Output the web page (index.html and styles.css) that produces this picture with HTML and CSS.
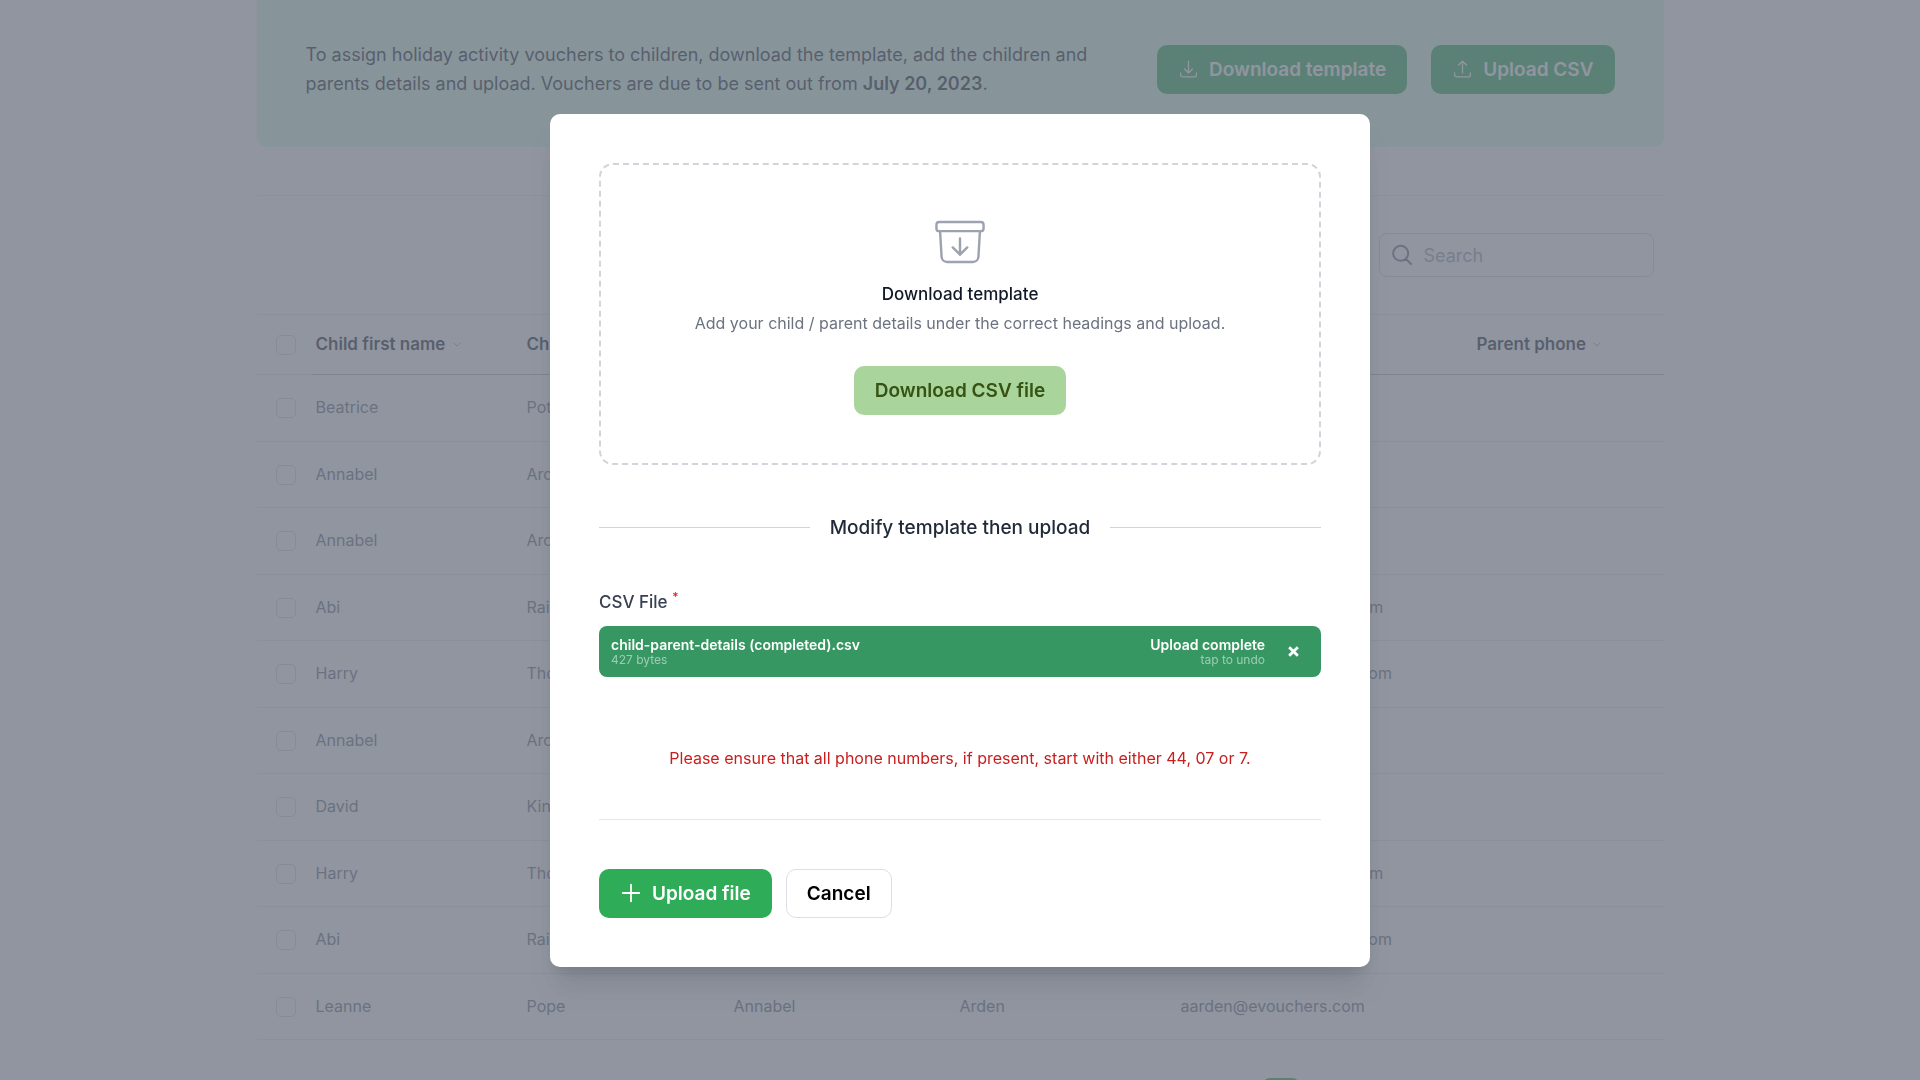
FILE: index.html
```html
<!DOCTYPE html>
<html lang="en">
<head>
    <meta charset="UTF-8">
    <meta name="viewport" content="width=device-width, initial-scale=1.0">
    <link rel="stylesheet" href="styles.css">
    <title>Upload children</title>
</head>
<body class="modal-open">
    <main class="container">
        <section class="banner">
            <p>To assign holiday activity vouchers to children, download the template, add the children and parents details and upload. Vouchers are due to be sent out from <strong>July 20, 2023</strong>.</p>
            <div class="banner-actions">
                <button type="button" class="btn btn-green">
                    <svg class="icon" viewBox="0 0 24 24"><path d="M3 16.5v2.25A2.25 2.25 0 0 0 5.25 21h13.5A2.25 2.25 0 0 0 21 18.75V16.5M16.5 12 12 16.5m0 0L7.5 12m4.5 4.5V3"/></svg>
                    Download template
                </button>
                <button type="button" class="btn btn-green">
                    <svg class="icon" viewBox="0 0 24 24"><path d="M3 16.5v2.25A2.25 2.25 0 0 0 5.25 21h13.5A2.25 2.25 0 0 0 21 18.75V16.5m-13.5-9L12 3m0 0 4.5 4.5M12 3v13.5"/></svg>
                    Upload CSV
                </button>
            </div>
        </section>

        <div class="toolbar">
            <div class="search">
                <svg class="search-icon" viewBox="0 0 24 24"><path d="m21 21-5.2-5.2m0 0A7.5 7.5 0 1 0 5.2 5.2a7.5 7.5 0 0 0 10.6 10.6Z"/></svg>
                <input type="search" placeholder="Search" aria-label="Search">
            </div>
        </div>

        <table class="children">
            <colgroup>
                <col class="col-check">
                <col class="col-first">
                <col class="col-last">
                <col class="col-pfirst">
                <col class="col-plast">
                <col class="col-email">
                <col class="col-phone">
            </colgroup>
            <thead>
                <tr>
                    <th class="check"><input type="checkbox" aria-label="Select all"></th>
                    <th>Child first name <svg class="sort" viewBox="0 0 10 10"><path d="m2 3 3 3 3-3"/></svg></th>
                    <th>Child last name <svg class="sort" viewBox="0 0 10 10"><path d="m2 3 3 3 3-3"/></svg></th>
                    <th>Parent first name <svg class="sort" viewBox="0 0 10 10"><path d="m2 3 3 3 3-3"/></svg></th>
                    <th>Parent last name <svg class="sort" viewBox="0 0 10 10"><path d="m2 3 3 3 3-3"/></svg></th>
                    <th>Parent email <svg class="sort" viewBox="0 0 10 10"><path d="m2 3 3 3 3-3"/></svg></th>
                    <th>Parent phone <svg class="sort" viewBox="0 0 10 10"><path d="m2 3 3 3 3-3"/></svg></th>
                </tr>
            </thead>
            <tbody>
                <tr><td class="check"><input type="checkbox" aria-label="Select Beatrice"></td><td>Beatrice</td><td>Potter</td><td></td><td></td><td></td><td></td></tr>
                <tr><td class="check"><input type="checkbox" aria-label="Select Annabel"></td><td>Annabel</td><td>Arden</td><td></td><td></td><td></td><td></td></tr>
                <tr><td class="check"><input type="checkbox" aria-label="Select Annabel"></td><td>Annabel</td><td>Arden</td><td></td><td></td><td></td><td></td></tr>
                <tr><td class="check"><input type="checkbox" aria-label="Select Abi"></td><td>Abi</td><td>Raines</td><td>Stephen</td><td>Raines</td><td>sraines12@evouchers.com</td><td></td></tr>
                <tr><td class="check"><input type="checkbox" aria-label="Select Harry"></td><td>Harry</td><td>Thomas</td><td>Martin</td><td>Thomas</td><td>mthomas2@evouchers.com</td><td></td></tr>
                <tr><td class="check"><input type="checkbox" aria-label="Select Annabel"></td><td>Annabel</td><td>Arden</td><td></td><td></td><td></td><td></td></tr>
                <tr><td class="check"><input type="checkbox" aria-label="Select David"></td><td>David</td><td>King</td><td></td><td></td><td></td><td></td></tr>
                <tr><td class="check"><input type="checkbox" aria-label="Select Harry"></td><td>Harry</td><td>Thomas</td><td>Stephen</td><td>Thomas</td><td>sraines12@evouchers.com</td><td></td></tr>
                <tr><td class="check"><input type="checkbox" aria-label="Select Abi"></td><td>Abi</td><td>Raines</td><td>Martin</td><td>Raines</td><td>mthomas2@evouchers.com</td><td></td></tr>
                <tr><td class="check"><input type="checkbox" aria-label="Select Leanne"></td><td>Leanne</td><td>Pope</td><td>Annabel</td><td>Arden</td><td>aarden@evouchers.com</td><td></td></tr>
            </tbody>
        </table>

        <nav class="pager">
            <a href="#" class="current" aria-label="Page 1"></a>
        </nav>
    </main>

    <div class="overlay">
        <form class="modal" role="dialog" aria-modal="true">
            <div class="template-box">
                <svg class="archive-icon" viewBox="0 0 24 24"><path d="m20.25 7.5-.625 10.632a2.25 2.25 0 0 1-2.247 2.118H6.622a2.25 2.25 0 0 1-2.247-2.118L3.75 7.5M12 10.5v6.75m0 0-3-3m3 3 3-3M3.375 7.5h17.25c.621 0 1.125-.504 1.125-1.125v-1.5c0-.621-.504-1.125-1.125-1.125H3.375c-.621 0-1.125.504-1.125 1.125v1.5c0 .621.504 1.125 1.125 1.125Z"/></svg>
                <h3>Download template</h3>
                <p>Add your child / parent details under the correct headings and upload.</p>
                <button type="button" class="btn btn-light">Download CSV file</button>
            </div>

            <h2 class="divider">Modify template then upload</h2>

            <label class="file-label" for="csv-file">CSV File <sup>*</sup></label>
            <div class="file-item">
                <input type="file" id="csv-file" accept=".csv">
                <div class="file-info">
                    <span class="file-main">child-parent-details (completed).csv</span>
                    <span class="file-sub">427 bytes</span>
                </div>
                <div class="file-status">
                    <span class="file-main">Upload complete</span>
                    <span class="file-sub">tap to undo</span>
                </div>
                <button type="button" class="file-remove" aria-label="Remove">
                    <svg viewBox="0 0 12 12"><path d="m2 2 8 8M10 2l-8 8"/></svg>
                </button>
            </div>

            <p class="error">Please ensure that all phone numbers, if present, start with either 44, 07 or 7.</p>

            <div class="modal-actions">
                <button type="submit" class="btn btn-green">
                    <svg class="icon" viewBox="0 0 24 24"><path d="M12 3v18M3 12h18"/></svg>
                    Upload file
                </button>
                <button type="button" class="btn btn-white">Cancel</button>
            </div>
        </form>
    </div>
</body>
</html>
```
FILE: styles.css
```css
* {
    box-sizing: border-box;
}

body {
    margin: 0;
    font-family: Inter, "Liberation Sans", sans-serif;
    font-size: 16px;
    line-height: 24px;
    color: #6b7280;
    background-color: #fff;
}

.modal-open {
    height: 100vh;
    overflow: hidden;
}

h2, h3, p {
    margin: 0;
}

button, input {
    font-family: inherit;
}

svg {
    fill: none;
    stroke: currentColor;
    stroke-linecap: round;
    stroke-linejoin: round;
}

.container {
    max-width: 1407px;
    margin: 0 auto;
}

/* buttons */
.btn {
    display: inline-flex;
    align-items: center;
    gap: 10px;
    height: 49px;
    padding: 0 20px;
    border: 1px solid transparent;
    border-radius: 10px;
    font-size: 19px;
    font-weight: 600;
    white-space: nowrap;
    cursor: pointer;
}

.btn-green {
    background-color: #2fac58;
    color: #fff;
}

.btn-light {
    background-color: #a9d59d;
    color: #365314;
}

.btn-white {
    background-color: #fff;
    border-color: #dcdfe3;
    color: #000;
}

.icon {
    width: 22px;
    height: 22px;
    stroke-width: 2;
}

/* page behind the modal */
.banner {
    display: flex;
    align-items: center;
    justify-content: space-between;
    gap: 48px;
    padding: 40px 49px 49px;
    border-radius: 0 0 10px 10px;
    background-color: #dcfce7;
    color: #1f2937;
    font-size: 18px;
    line-height: 29px;
}

.banner strong {
    font-weight: 600;
}

.banner-actions {
    display: flex;
    flex-shrink: 0;
    gap: 24px;
}

.banner .icon {
    width: 21px;
    stroke-width: 1.5;
}

.toolbar {
    display: flex;
    justify-content: flex-end;
    margin-top: 48px;
    padding: 37px 10px;
    border-top: 1px solid #eceef1;
}

.search {
    display: flex;
    align-items: center;
    gap: 10px;
    width: 275px;
    height: 44px;
    padding: 0 10px;
    border: 1px solid #d1d5db;
    border-radius: 8px;
}

.search-icon {
    width: 24px;
    height: 24px;
    stroke-width: 2;
}

.search input {
    flex: 1;
    min-width: 0;
    padding: 0;
    border: none;
    outline: none;
    background: none;
    font-size: 18px;
}

.search input::placeholder {
    color: #9ca3af;
}

.children {
    width: 100%;
    table-layout: fixed;
    border-collapse: collapse;
    border-top: 1px solid #e5e7eb;
}

.col-check { width: 55px; }
.col-first { width: 211px; }
.col-last { width: 207px; }
.col-pfirst { width: 226px; }
.col-plast { width: 221px; }
.col-email { width: 296px; }

.children th,
.children td {
    padding: 0 4px 2px;
    border-bottom: 1px solid #e5e7eb;
    text-align: left;
    white-space: nowrap;
}

.children th {
    height: 60px;
    border-bottom-color: #b6bac2;
    color: #1f2937;
    font-size: 17px;
    font-weight: 600;
}

.children td {
    height: 66px;
}

.children tr:nth-child(odd) td {
    height: 67px;
}

.children .check {
    padding: 0 0 0 19px;
    border-bottom-color: #e5e7eb;
}

.children input {
    display: block;
    appearance: none;
    width: 20px;
    height: 20px;
    margin: 0;
    border: 1px solid #d1d5db;
    border-radius: 5px;
}

.sort {
    width: 10px;
    height: 10px;
    margin-left: 2px;
    color: #9ca3af;
}

.pager {
    display: flex;
    justify-content: flex-end;
    margin-top: 38px;
    padding-right: 364px;
}

.pager a {
    width: 38px;
    height: 38px;
    border-radius: 8px;
    background-color: #2fac58;
}

/* modal */
.overlay {
    position: fixed;
    inset: 0;
    display: flex;
    align-items: center;
    justify-content: center;
    background-color: rgba(107, 114, 128, 0.75);
}

.modal {
    width: 820px;
    padding: 49px;
    border-radius: 10px;
    background-color: #fff;
    box-shadow: 0 24px 30px -6px rgba(0, 0, 0, 0.1), 0 10px 12px -6px rgba(0, 0, 0, 0.1);
}

.template-box {
    display: flex;
    flex-direction: column;
    align-items: center;
    padding: 48px;
    border: 2px dashed #d1d5db;
    border-radius: 14px;
}

.archive-icon {
    width: 58px;
    height: 58px;
    stroke-width: 1;
    color: #9ca3af;
}

.template-box h3 {
    margin-top: 11px;
    color: #111827;
    font-size: 17px;
    font-weight: 500;
}

.template-box p {
    margin: 5px 0 31px;
}

.divider {
    display: flex;
    align-items: center;
    gap: 20px;
    margin: 49px 0 48px;
    color: #1f2937;
    font-size: 19px;
    font-weight: 500;
    line-height: 28px;
}

.divider::before,
.divider::after {
    content: "";
    flex: 1;
    border-top: 1px solid #d1d5db;
}

.file-label {
    display: block;
    margin-bottom: 12px;
    color: #374151;
    font-size: 17px;
    font-weight: 500;
}

.file-label sup {
    color: #dc2626;
    font-size: 12px;
    line-height: 0;
}

.file-item {
    display: flex;
    align-items: center;
    height: 51px;
    padding: 0 16px 0 12px;
    border-radius: 8px;
    background-color: #369763;
    color: #fff;
}

.file-item input {
    position: absolute;
    width: 1px;
    height: 1px;
    opacity: 0;
}

.file-info,
.file-status {
    display: flex;
    flex-direction: column;
}

.file-info {
    flex: 1;
}

.file-status {
    align-items: flex-end;
    margin-right: 16px;
}

.file-main {
    font-size: 14px;
    font-weight: 600;
    line-height: 17px;
}

.file-sub {
    font-size: 12px;
    line-height: 14px;
    opacity: 0.5;
}

.file-remove {
    display: flex;
    align-items: center;
    justify-content: center;
    width: 24px;
    height: 24px;
    padding: 0;
    border: none;
    background: none;
    color: #fff;
    cursor: pointer;
}

.file-remove svg {
    width: 13px;
    height: 13px;
    stroke-width: 2.6;
    stroke-linecap: butt;
}

.error {
    margin-top: 69px;
    color: #c81e1e;
    text-align: center;
}

.modal-actions {
    display: flex;
    gap: 14px;
    margin-top: 49px;
    padding-top: 49px;
    border-top: 1px solid #e5e7eb;
}
```
